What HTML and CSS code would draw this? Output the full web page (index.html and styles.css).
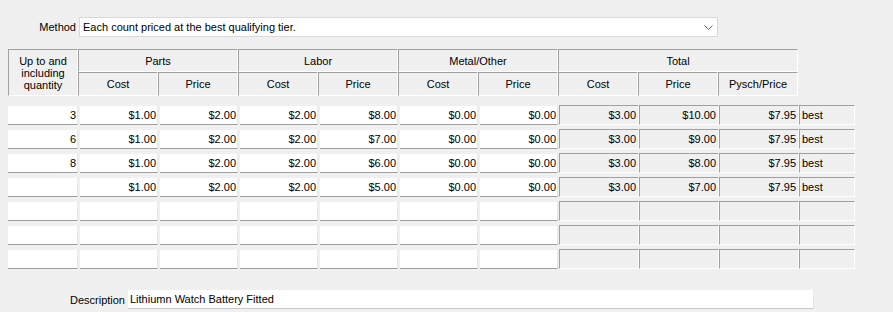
FILE: index.html
```html
<!DOCTYPE html>
<html>
<head>
<meta charset="utf-8">
<link rel="stylesheet" href="styles.css">
</head>
<body>
<div class="page">
  <div class="method-row">
    <div class="method-label">Method</div>
    <div class="combo">
      <span>Each count priced at the best qualifying tier.</span>
      <svg class="chev" width="9" height="5" viewBox="0 0 9 5"><polyline points="0.5,0.5 4.5,4.5 8.5,0.5" fill="none" stroke="#606060" stroke-width="1"/></svg>
    </div>
  </div>

  <div class="header">
    <div class="h qty">Up to and<br>including<br>quantity</div>
    <div class="h span2">Parts</div>
    <div class="h span2">Labor</div>
    <div class="h span2">Metal/Other</div>
    <div class="h span3">Total</div>
    <div class="h">Cost</div>
    <div class="h">Price</div>
    <div class="h">Cost</div>
    <div class="h">Price</div>
    <div class="h">Cost</div>
    <div class="h">Price</div>
    <div class="h">Cost</div>
    <div class="h">Price</div>
    <div class="h">Pysch/Price</div>
  </div>

  <div class="rows">
    <div class="row">
      <div class="c first">3</div><div class="c">$1.00</div><div class="c">$2.00</div><div class="c">$2.00</div><div class="c">$8.00</div><div class="c">$0.00</div><div class="c last">$0.00</div>
      <div class="g">$3.00</div><div class="g">$10.00</div><div class="g">$7.95</div><div class="g note">best</div>
    </div>
    <div class="row">
      <div class="c first">6</div><div class="c">$1.00</div><div class="c">$2.00</div><div class="c">$2.00</div><div class="c">$7.00</div><div class="c">$0.00</div><div class="c last">$0.00</div>
      <div class="g">$3.00</div><div class="g">$9.00</div><div class="g">$7.95</div><div class="g note">best</div>
    </div>
    <div class="row">
      <div class="c first">8</div><div class="c">$1.00</div><div class="c">$2.00</div><div class="c">$2.00</div><div class="c">$6.00</div><div class="c">$0.00</div><div class="c last">$0.00</div>
      <div class="g">$3.00</div><div class="g">$8.00</div><div class="g">$7.95</div><div class="g note">best</div>
    </div>
    <div class="row">
      <div class="c first"></div><div class="c">$1.00</div><div class="c">$2.00</div><div class="c">$2.00</div><div class="c">$5.00</div><div class="c">$0.00</div><div class="c last">$0.00</div>
      <div class="g">$3.00</div><div class="g">$7.00</div><div class="g">$7.95</div><div class="g note">best</div>
    </div>
    <div class="row">
      <div class="c first"></div><div class="c"></div><div class="c"></div><div class="c"></div><div class="c"></div><div class="c"></div><div class="c last"></div>
      <div class="g"></div><div class="g"></div><div class="g"></div><div class="g note"></div>
    </div>
    <div class="row">
      <div class="c first"></div><div class="c"></div><div class="c"></div><div class="c"></div><div class="c"></div><div class="c"></div><div class="c last"></div>
      <div class="g"></div><div class="g"></div><div class="g"></div><div class="g note"></div>
    </div>
    <div class="row">
      <div class="c first"></div><div class="c"></div><div class="c"></div><div class="c"></div><div class="c"></div><div class="c"></div><div class="c last"></div>
      <div class="g"></div><div class="g"></div><div class="g"></div><div class="g note"></div>
    </div>
  </div>

  <div class="desc-row">
    <div class="desc-label">Description</div>
    <div class="desc-input">Lithiumn Watch Battery Fitted</div>
  </div>
</div>
</body>
</html>
```
FILE: styles.css
```css
html, body {
  margin: 0;
  background: #f0f0f0;
}
body {
  font-family: "Liberation Sans", Arial, sans-serif;
  font-size: 11px;
  color: #000;
}
.page {
  padding-top: 17px;
}
.method-row {
  display: flex;
  align-items: center;
  height: 20px;
}
.method-label {
  width: 79px;
  box-sizing: border-box;
  padding-right: 3px;
  text-align: right;
}
.combo {
  width: 639px;
  height: 20px;
  box-sizing: border-box;
  background: #fff;
  border: 1px solid #d9d9d9;
  display: flex;
  align-items: center;
  justify-content: space-between;
  padding: 0 4px 0 3px;
}
.chev {
  display: block;
}
.header {
  margin: 12px 0 0 8px;
  display: grid;
  grid-template-columns: 70px repeat(9, 80px);
  grid-template-rows: 23px 24px;
  width: 790px;
}
.h {
  box-sizing: border-box;
  border-top: 1px solid #a0a0a0;
  border-left: 1px solid #a0a0a0;
  border-right: 1px solid #fff;
  border-bottom: 1px solid #fff;
  display: flex;
  align-items: center;
  justify-content: center;
  text-align: center;
}
.qty {
  grid-row: span 2;
  line-height: 12px;
}
.span2 {
  grid-column: span 2;
}
.span3 {
  grid-column: span 3;
}
.rows {
  margin: 9px 0 0 8px;
  display: flex;
  flex-direction: column;
  gap: 4px;
}
.row {
  display: flex;
  height: 20px;
}
.c {
  width: 78px;
  height: 19px;
  margin-top: 1px;
  margin-right: 2px;
  box-sizing: border-box;
  background: #fff;
  border-bottom: 1px solid #a0a0a0;
  border-right: 1px solid #e6e6e6;
  text-align: right;
  padding-right: 1px;
  line-height: 18px;
}
.c.first {
  width: 70px;
}
.c.last {
  margin-right: 1px;
}
.g {
  width: 80px;
  height: 20px;
  box-sizing: border-box;
  background: #f0f0f0;
  border-top: 1px solid #a0a0a0;
  border-left: 1px solid #a0a0a0;
  border-right: 1px solid #fff;
  border-bottom: 1px solid #fff;
  text-align: right;
  padding-right: 2px;
  line-height: 18px;
}
.g.note {
  width: 56px;
  text-align: left;
  padding: 0 0 0 2px;
}
.desc-row {
  margin-top: 21px;
  display: flex;
  align-items: center;
  height: 19px;
}
.desc-label {
  width: 128px;
  box-sizing: border-box;
  padding-right: 3px;
  text-align: right;
}
.desc-input {
  width: 686px;
  height: 19px;
  box-sizing: border-box;
  background: #fff;
  border-bottom: 1px solid #c8c8c8;
  border-right: 1px solid #e6e6e6;
  padding-left: 2px;
  line-height: 18px;
}
```
